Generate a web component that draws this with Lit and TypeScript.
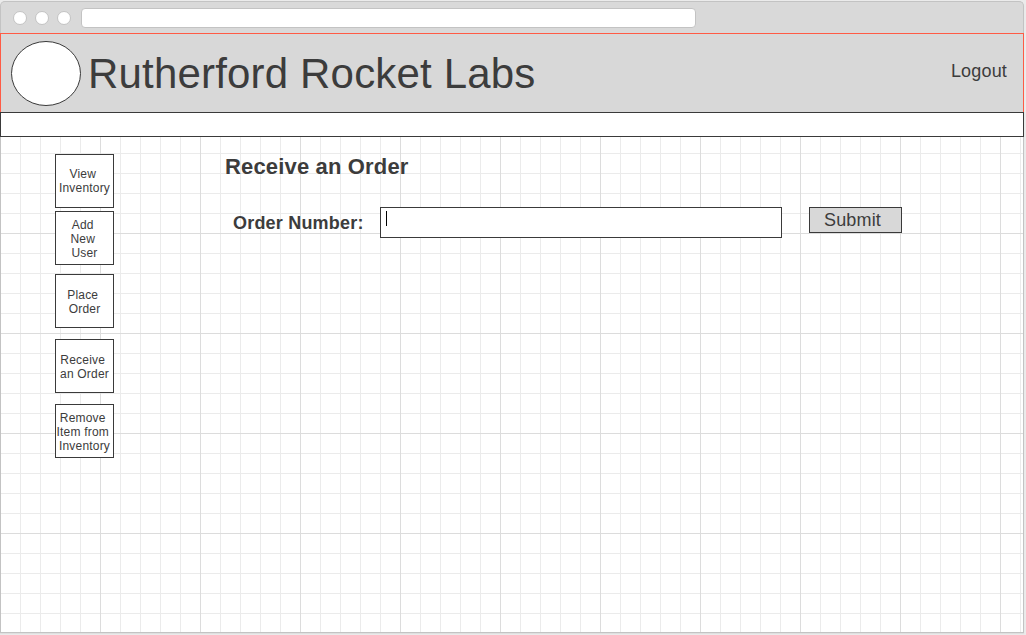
import { LitElement, html, css } from "lit";
import { customElement } from "lit/decorators.js";

interface NavItem {
  lines: string[];
  gap: number;
  drop: number;
}

// A trailing non-breaking space nudges a centred line to the left.
const NAV: NavItem[] = [
  { lines: ["View\u00a0", "Inventory"], gap: 0, drop: 0 },
  { lines: ["Add\u00a0", "New\u00a0", "User"], gap: 3, drop: 2 },
  { lines: ["Place\u00a0", "Order"], gap: 9, drop: 2 },
  { lines: ["Receive\u00a0", "an Order"], gap: 11, drop: 2 },
  { lines: ["Remove\u00a0", "Item from\u00a0", "Inventory"], gap: 11, drop: 2 },
];

@customElement("app-root")
export class AppRoot extends LitElement {
  static styles = css`
    :host {
      display: block;
      width: 1026px;
      height: 635px;
      overflow: hidden;
      background: #ebebeb;
      box-sizing: border-box;
      padding-top: 1px;
      font-family: "Liberation Sans", Arial, sans-serif;
      color: #3c3c3c;
    }
    * {
      box-sizing: border-box;
    }
    .window {
      width: 1024px;
      height: 632px;
      display: flex;
      flex-direction: column;
      border-radius: 5px 5px 0 0;
      box-shadow: 0 1px 1px #dedede;
    }
    .chrome {
      height: 32px;
      flex: none;
      display: flex;
      align-items: center;
      padding: 1px 0 0 12px;
      background: #d9d9d9;
      border: 1px solid #c3c3c3;
      border-bottom: 0;
      border-radius: 5px 5px 0 0;
    }
    .dot {
      width: 14px;
      height: 14px;
      margin-right: 8px;
      border-radius: 50%;
      background: #fff;
      border: 1px solid #c3c3c3;
    }
    .address {
      width: 615px;
      height: 20px;
      margin-left: 2px;
      border-radius: 4px;
      background: #fff;
      border: 1px solid #c3c3c3;
    }
    .header {
      height: 79px;
      flex: none;
      display: flex;
      align-items: center;
      background: #d8d8d8;
      border: 1px solid #ff5b45;
      border-bottom: 0;
      padding: 0 16px 0 10px;
    }
    .logo {
      width: 70px;
      height: 65px;
      flex: none;
      display: block;
    }
    .brand {
      margin: 0 0 0 7px;
      padding-top: 2px;
      font-size: 42px;
      font-weight: 400;
      line-height: 48px;
      letter-spacing: 0.18px;
      white-space: nowrap;
    }
    .logout {
      margin-left: auto;
      padding-bottom: 5px;
      font-size: 18px;
      line-height: 20px;
      letter-spacing: 0.17px;
    }
    .strip {
      height: 25px;
      flex: none;
      background: #fff;
      border: 1px solid #3a3a3a;
    }
    .canvas {
      flex: 1;
      display: flex;
      padding: 17px 0 0 54px;
      border: 1px solid #c3c3c3;
      border-top: 0;
      background-color: #fff;
      background-image: linear-gradient(90deg, #dcdcdc 1px, transparent 1px),
        linear-gradient(#dcdcdc 1px, transparent 1px),
        linear-gradient(90deg, #ebebeb 1px, transparent 1px),
        linear-gradient(#ebebeb 1px, transparent 1px);
      background-size: 100px 100px, 100px 100px, 20px 20px, 20px 20px;
      background-position: 99px 0, 0 96px, 19px 0, 0 16px;
    }
    .nav {
      width: 59px;
      flex: none;
    }
    .tile {
      height: 54px;
      display: flex;
      flex-direction: column;
      align-items: center;
      justify-content: center;
      background: #fff;
      border: 1px solid #3a3a3a;
      font-size: 12px;
      line-height: 14px;
      letter-spacing: 0.2px;
      white-space: nowrap;
    }
    .main {
      margin-left: 111px;
    }
    .title {
      margin: 0;
      font-size: 22px;
      line-height: 26px;
      font-weight: 700;
      letter-spacing: 0.16px;
    }
    .form {
      display: flex;
      align-items: flex-start;
      margin-top: 27px;
      padding-left: 8px;
    }
    .label {
      width: 147px;
      padding-top: 6px;
      font-size: 18px;
      line-height: 20px;
      font-weight: 700;
      letter-spacing: 0.2px;
    }
    .field {
      width: 402px;
      height: 31px;
      padding: 3px 0 0 5px;
      background: #fff;
      border: 1px solid #3a3a3a;
    }
    .caret {
      width: 1px;
      height: 15px;
      background: #000;
    }
    .submit {
      width: 93px;
      height: 26px;
      margin-left: 27px;
      padding: 0 6px 1px 0;
      background: #d8d8d8;
      border: 1px solid #3a3a3a;
      border-radius: 0;
      font: 18px/20px "Liberation Sans", Arial, sans-serif;
      letter-spacing: 0.17px;
      color: inherit;
    }
  `;

  render() {
    return html`
      <div class="window">
        <div class="chrome">
          <span class="dot"></span><span class="dot"></span><span class="dot"></span>
          <div class="address"></div>
        </div>
        <header class="header">
          <svg class="logo" viewBox="0 0 70 65">
            <ellipse cx="35" cy="32.5" rx="34.5" ry="32" fill="#fff" stroke="#3a3a3a" />
          </svg>
          <h1 class="brand">Rutherford Rocket Labs</h1>
          <span class="logout">Logout</span>
        </header>
        <div class="strip"></div>
        <div class="canvas">
          <nav class="nav">
            ${NAV.map(
              (item) => html`<div class="tile" style="margin-top:${item.gap}px;padding-top:${item.drop}px">
                ${item.lines.map((line) => html`<span>${line}</span>`)}
              </div>`
            )}
          </nav>
          <main class="main">
            <h2 class="title">Receive an Order</h2>
            <div class="form">
              <label class="label">Order Number:</label>
              <div class="field"><div class="caret"></div></div>
              <button class="submit">Submit</button>
            </div>
          </main>
        </div>
      </div>
    `;
  }
}
